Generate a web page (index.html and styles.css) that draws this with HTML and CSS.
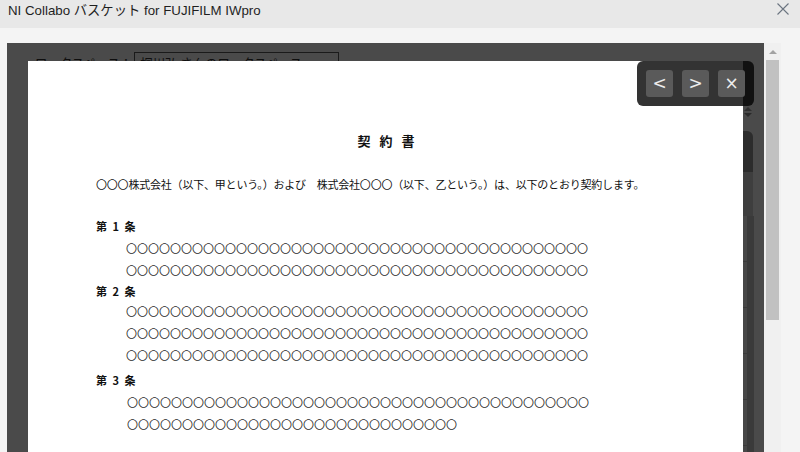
FILE: index.html
```html
<!DOCTYPE html>
<html lang="ja">
<head>
<meta charset="utf-8">
<title>NI Collabo バスケット for FUJIFILM IWpro</title>
<link rel="stylesheet" href="styles.css">
</head>
<body>
<div class="app">
  <header class="titlebar">
    <span class="title">NI Collabo バスケット for FUJIFILM IWpro</span>
    <svg class="close" width="12" height="12" viewBox="0 0 12 12"><path d="M0.5 0.5 L11.5 11.5 M11.5 0.5 L0.5 11.5" stroke="#6b7480" stroke-width="1.1" fill="none"/></svg>
  </header>
  <div class="main">
    <section class="panel">
      <div class="ws-row">
        <span class="ws-label">ワークスペース：</span>
        <span class="ws-select"><span>桐川弘 さんのワークスペース</span><span class="caret">⌄</span></span>
      </div>

      <div class="viewer">
        <div class="doc">
          <h1 class="doc-title"><span>契</span><span>約</span><span>書</span></h1>
          <p class="lead">〇〇〇株式会社（以下、甲という。）および　株式会社〇〇〇（以下、乙という。）は、以下のとおり契約します。</p>
          <div class="article a1">
            <div class="head">第 1 条</div>
            <div class="line">〇〇〇〇〇〇〇〇〇〇〇〇〇〇〇〇〇〇〇〇〇〇〇〇〇〇〇〇〇〇〇〇〇〇〇〇〇〇〇〇〇〇</div>
            <div class="line">〇〇〇〇〇〇〇〇〇〇〇〇〇〇〇〇〇〇〇〇〇〇〇〇〇〇〇〇〇〇〇〇〇〇〇〇〇〇〇〇〇〇</div>
          </div>
          <div class="article a2">
            <div class="head">第 2 条</div>
            <div class="line">〇〇〇〇〇〇〇〇〇〇〇〇〇〇〇〇〇〇〇〇〇〇〇〇〇〇〇〇〇〇〇〇〇〇〇〇〇〇〇〇〇〇</div>
            <div class="line">〇〇〇〇〇〇〇〇〇〇〇〇〇〇〇〇〇〇〇〇〇〇〇〇〇〇〇〇〇〇〇〇〇〇〇〇〇〇〇〇〇〇</div>
            <div class="line">〇〇〇〇〇〇〇〇〇〇〇〇〇〇〇〇〇〇〇〇〇〇〇〇〇〇〇〇〇〇〇〇〇〇〇〇〇〇〇〇〇〇</div>
          </div>
          <div class="article a3">
            <div class="head">第 3 条</div>
            <div class="line">〇〇〇〇〇〇〇〇〇〇〇〇〇〇〇〇〇〇〇〇〇〇〇〇〇〇〇〇〇〇〇〇〇〇〇〇〇〇〇〇〇〇</div>
            <div class="line">〇〇〇〇〇〇〇〇〇〇〇〇〇〇〇〇〇〇〇〇〇〇〇〇〇〇〇〇〇〇</div>
          </div>
        </div>
        <div class="side">
          <div class="side-col">
            <div class="arrows"><span class="up"></span><span class="down"></span></div>
            <div class="thumb-dark"></div>
            <div class="thumb-mid"></div>
            <div class="rail"></div>
          </div>
        </div>
        <div class="controls">
          <button class="ctl">&lt;</button>
          <button class="ctl">&gt;</button>
          <button class="ctl">×</button>
        </div>
      </div>
    </section>
    <div class="scrollbar">
      <div class="sb-arrow"></div>
      <div class="sb-thumb"></div>
    </div>
  </div>
</div>
</body>
</html>
```
FILE: styles.css
```css
* { box-sizing: border-box; }
html, body { margin: 0; padding: 0; }
body {
  width: 800px;
  height: 452px;
  overflow: hidden;
  font-family: "Liberation Sans", "Noto Sans CJK JP", sans-serif;
  background: #f4f4f4;
}
.app {
  width: 800px;
  height: 452px;
  display: flex;
  flex-direction: column;
  background: #f4f4f4;
}
.titlebar {
  height: 28px;
  flex: none;
  background: #e8e8e8;
  display: flex;
  align-items: flex-start;
  justify-content: space-between;
  padding: 0 11px 0 8px;
}
.title {
  font-size: 13.3px;
  line-height: 19px;
  color: #1f1f1f;
  padding-top: 1px;
}
.close { margin-top: 3px; }

.main {
  flex: 1;
  display: flex;
  padding: 15px 0 0 7px;
  min-height: 0;
}
.panel {
  width: 757px;
  background: #4a4a4a;
  position: relative;
  overflow: hidden;
}
.ws-row {
  display: flex;
  align-items: flex-start;
  padding: 9px 0 0 28px;
  font-family: "Noto Sans CJK JP", sans-serif;
  font-size: 12.4px;
  color: #0e0e0e;
}
.ws-label { line-height: 20px; padding-top: 1px; }
.ws-select {
  margin-left: 2px;
  width: 205px;
  height: 22px;
  border: 1px solid #1a1a1a;
  display: flex;
  justify-content: space-between;
  padding: 0 8px 0 5px;
  line-height: 20px;
}
.caret { font-size: 12px; }

.viewer {
  position: absolute;
  left: 21px;
  top: 18px;
  right: 0;
  bottom: 0;
  display: flex;
}
.doc {
  width: 715px;
  background: #fff;
  padding: 69px 0 0 68px;
  font-family: "Noto Sans CJK JP", sans-serif;
  color: #111;
  font-size: 11px;
}
.doc-title {
  margin: 0 0 0 -68px;
  display: flex;
  justify-content: center;
  gap: 9px;
  font-size: 13px;
  line-height: 22px;
  font-weight: bold;
  padding-left: 1px;
}
.lead {
  margin: 21px 0 0;
  line-height: 22px;
  letter-spacing: -0.2px;
}
.article { margin-top: 21px; }
.head { font-weight: bold; line-height: 20px; word-spacing: 3px; }
.line { padding-left: 30px; line-height: 22px; white-space: nowrap; color: #2a2a2a; }
.a1 .head { line-height: 21px; }
.a2 { margin-top: 0; }
.a2 .head { line-height: 18px; margin-top: 1px; }
.a3 { margin-top: 3px; }
.a3 .head { line-height: 22px; }
.a3 .line { padding-left: 31px; }

.side {
  flex: 1;
  background: #4a4a4a;
  display: flex;
}
.side-col {
  width: 11px;
  display: flex;
  flex-direction: column;
}
.arrows {
  margin-top: 46px;
  height: 24px;
  display: flex;
  flex-direction: column;
  align-items: center;
  gap: 2px;
  padding-right: 2px;
}
.up {
  width: 0; height: 0;
  border-left: 4px solid transparent;
  border-right: 4px solid transparent;
  border-bottom: 4px solid #2f2f2f;
}
.down {
  width: 0; height: 0;
  border-left: 4px solid transparent;
  border-right: 4px solid transparent;
  border-top: 4px solid #2a2a2a;
}
.thumb-dark {
  height: 41px;
  background: #2c2c2c;
  border-radius: 0 6px 0 0;
  width: 10px;
}
.thumb-mid {
  height: 44px;
  background: #3e3e3e;
  width: 10px;
}
.rail {
  flex: 1;
  background:
    linear-gradient(to right, transparent 4px, #3a3a3a 4px),
    repeating-linear-gradient(to bottom, #474747 0 45px, #3a3a3a 45px 46px);
}

.controls {
  position: absolute;
  top: 0;
  right: 10px;
  width: 117px;
  height: 45px;
  border-radius: 6px;
  background: linear-gradient(to right, #333 106px, #111 106px);
  display: flex;
  gap: 9px;
  padding: 9px 0 0 9px;
}
.ctl {
  width: 27px;
  height: 27px;
  border: 0;
  border-radius: 3px;
  background: #5a5a5a;
  color: #ececec;
  font-family: "DejaVu Sans", sans-serif;
  font-size: 17px;
  line-height: 27px;
  padding: 0;
  text-align: center;
}

.scrollbar {
  width: 17px;
  background: #f0f0f0;
  display: flex;
  flex-direction: column;
  align-items: center;
  padding-top: 7px;
}
.sb-arrow {
  width: 0; height: 0;
  border-left: 4px solid transparent;
  border-right: 4px solid transparent;
  border-bottom: 4px solid #a3a3a3;
}
.sb-thumb {
  margin-top: 6px;
  width: 13px;
  height: 260px;
  background: #c1c1c1;
}
```
